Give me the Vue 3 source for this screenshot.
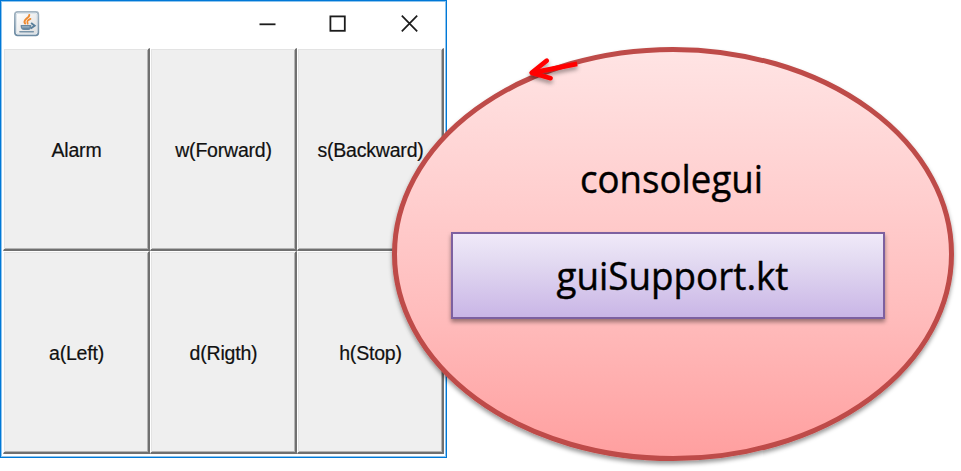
<script setup>
const buttons = ['Alarm', 'w(Forward)', 's(Backward)', 'a(Left)', 'd(Rigth)', 'h(Stop)']
</script>

<template>
  <main class="canvas">
    <section class="window">
      <header class="titlebar">
        <svg class="java" width="27" height="27" viewBox="0.5 0.5 27 27">
          <defs>
            <linearGradient id="frame" x1="0" y1="0" x2="0" y2="1">
              <stop offset="0" stop-color="#a3b4c1" />
              <stop offset="1" stop-color="#6d8ba3" />
            </linearGradient>
            <linearGradient id="tile" x1="0" y1="0" x2="1" y2="1">
              <stop offset="0" stop-color="#ffffff" />
              <stop offset="1" stop-color="#dedede" />
            </linearGradient>
          </defs>
          <rect x="2.4" y="2.4" width="23.4" height="23.4" rx="2.5" fill="#fff" stroke="url(#frame)" stroke-width="1.8" />
          <rect x="3.9" y="3.9" width="20.4" height="20.4" rx="1.5" fill="url(#tile)" stroke="#d9e2e9" stroke-width="1" />
          <g fill="none" stroke="#ee8a30" stroke-linecap="round">
            <path d="M16.8 5.6C17 8.6 9.6 10 12.6 14" stroke-width="2" />
            <path d="M18 9.4C14.2 11 14.6 12 15.2 14.2" stroke-width="1.7" />
          </g>
          <path d="M8.2 15.6H18.8V17C18.8 19 17.6 20.4 15.8 20.4H11.4C9.4 20.4 8.2 19 8.2 17Z" fill="#6989a2" />
          <path d="M9.4 17.4H17" stroke="#b7c7d3" stroke-width="0.9" />
          <path d="M18.6 13.4L22.2 16.2L18.2 19" fill="none" stroke="#587e9b" stroke-width="1.9" />
          <path d="M7.4 22.3H20.8" fill="none" stroke="#7894a9" stroke-width="1.6" stroke-linecap="round" />
        </svg>
        <svg class="controls" width="164" height="24" viewBox="0 0 164 24" fill="none" stroke="#1c1c1c">
          <path d="M1.5 12.3H17.5" stroke-width="1.8" />
          <rect x="72.4" y="4.4" width="14.4" height="14.4" stroke-width="1.8" />
          <path d="M143.8 3.7L159.2 19.3M159.2 3.7L143.8 19.3" stroke-width="1.7" />
        </svg>
      </header>
      <div class="grid">
        <button v-for="label in buttons" :key="label" class="cell">{{ label }}</button>
      </div>
    </section>

    <svg class="diagram" width="961" height="471" viewBox="0 0 961 471">
      <defs>
        <linearGradient id="pink" x1="0" y1="0" x2="0" y2="1">
          <stop offset="0" stop-color="#ffe4e4" />
          <stop offset="0.35" stop-color="#ffcfcf" />
          <stop offset="0.65" stop-color="#ffbcbc" />
          <stop offset="1" stop-color="#ff9f9f" />
        </linearGradient>
        <linearGradient id="violet" x1="0" y1="0" x2="0" y2="1">
          <stop offset="0" stop-color="#f0eaf9" />
          <stop offset="0.35" stop-color="#e2d9f1" />
          <stop offset="1" stop-color="#c9b5e6" />
        </linearGradient>
        <filter id="shadow" x="-10%" y="-20%" width="120%" height="150%">
          <feDropShadow dx="0" dy="3" stdDeviation="1.9" flood-color="#000" flood-opacity="0.4" />
        </filter>
        <filter id="arrow-shadow" x="-20%" y="-50%" width="140%" height="240%">
          <feDropShadow dx="0" dy="3" stdDeviation="1.9" flood-color="#000" flood-opacity="0.4" />
        </filter>
      </defs>
      <ellipse cx="673" cy="254" rx="278.5" ry="204.6" fill="url(#pink)" stroke="#be4b48" stroke-width="5" filter="url(#shadow)" />
      <rect x="452" y="233" width="432" height="85" fill="url(#violet)" stroke="#7d60a0" stroke-width="2" filter="url(#shadow)" />
      <g class="names">
        <text x="580" y="193" textLength="183" lengthAdjust="spacingAndGlyphs">consolegui</text>
        <text x="556.5" y="290" textLength="232" lengthAdjust="spacingAndGlyphs">guiSupport.kt</text>
      </g>
      <g fill="none" stroke="#ff0000" filter="url(#arrow-shadow)">
        <path d="M577.2 63.8L534 72.4" stroke-width="4.8" />
        <path d="M546.8 60.6L531.6 72.8L550.6 78.2" stroke-width="4.6" stroke-linecap="round" stroke-linejoin="round" />
      </g>
    </svg>
  </main>
</template>

<style>
body { background: #fff; overflow: hidden; }
</style>

<style scoped>
.canvas {
  position: relative;
  width: 961px;
  height: 471px;
  overflow: hidden;
  font-family: "Liberation Sans", Arial, sans-serif;
}
.window {
  box-sizing: border-box;
  width: 447px;
  height: 458px;
  border: 1px solid #0078d7;
  box-shadow: inset 0 0 0 1px #8fc5ee;
  padding: 0 2px;
  background: #fff;
}
.titlebar {
  display: flex;
  justify-content: space-between;
  align-items: flex-start;
  height: 47px;
  box-sizing: border-box;
  padding: 9px 22px 0 10px;
}
.controls { margin-top: 2px; }
.grid {
  display: grid;
  grid-template-columns: repeat(3, 147px);
  grid-template-rows: repeat(2, 203px);
}
.cell {
  margin: 0;
  padding: 2px 0 0 1px;
  border: solid;
  border-width: 1px 2px 2px 1px;
  border-color: #fff #707070 #707070 #fff;
  border-radius: 0;
  background: #efefef;
  box-shadow: inset 1px 1px 0 #e3e3e3, inset -1px -1px 0 #b4b4b4;
  font: 19.5px "Liberation Sans", Arial, sans-serif;
  letter-spacing: -0.2px;
  color: #111;
  white-space: nowrap;
  -webkit-text-stroke: 0.2px #111;
}
.diagram {
  position: absolute;
  left: 0;
  top: 0;
}
.names {
  font-family: "Open Sans", "Noto Sans", sans-serif;
  font-size: 38px;
  fill: #000;
  stroke: #000;
  stroke-width: 0.4px;
}
</style>
